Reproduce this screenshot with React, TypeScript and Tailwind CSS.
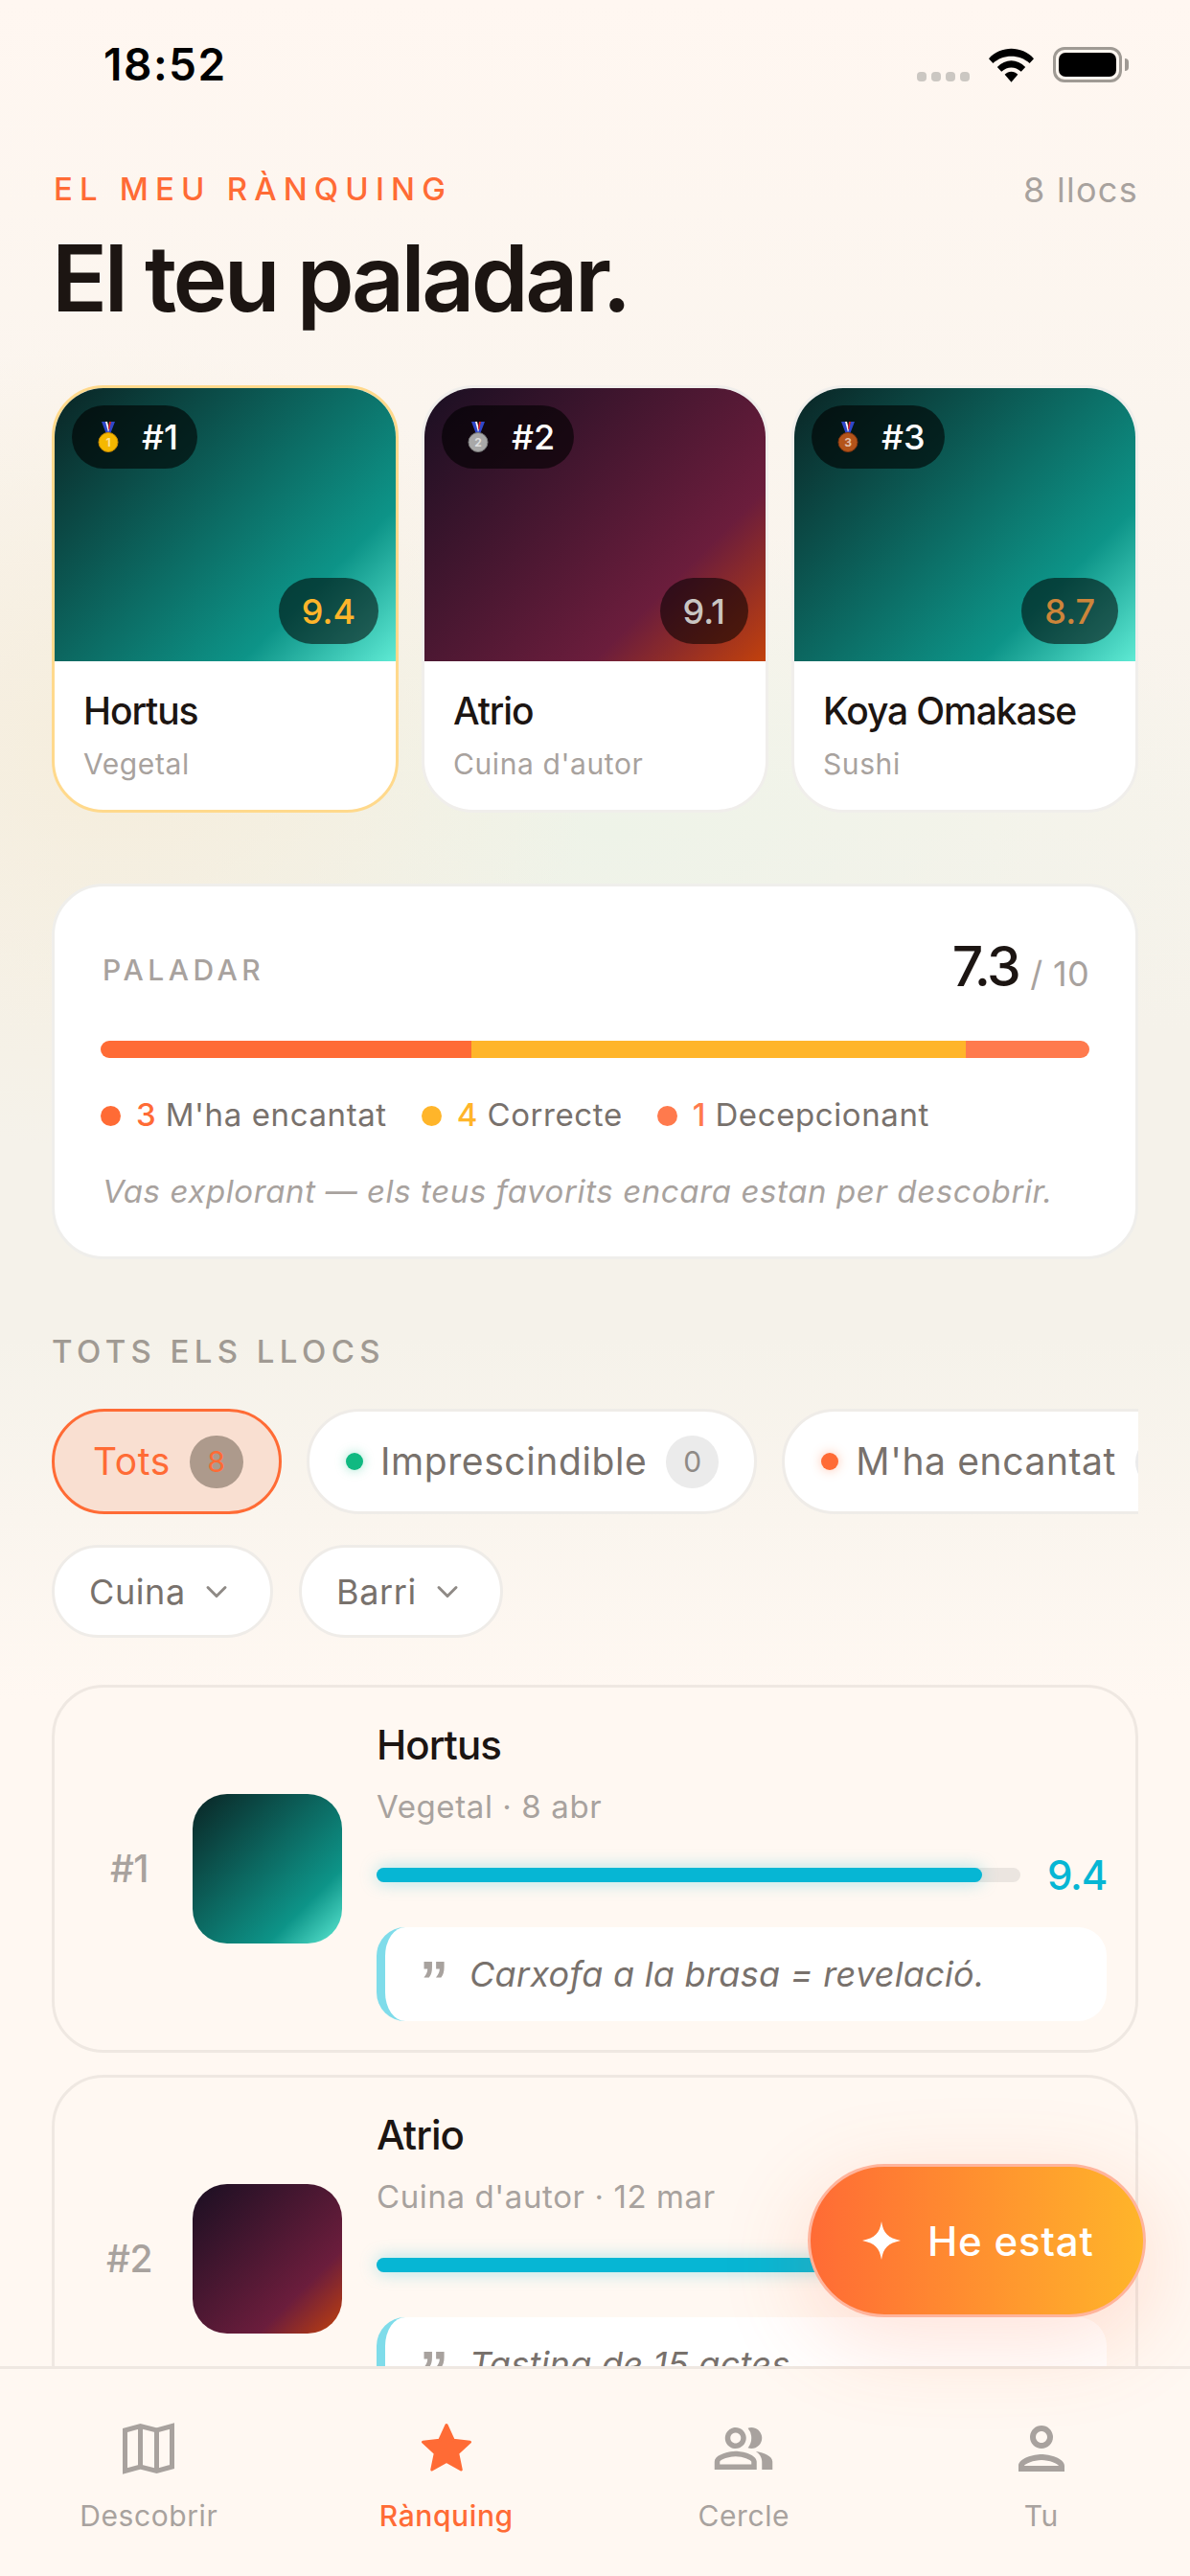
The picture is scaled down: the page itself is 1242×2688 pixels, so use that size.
import { ChevronDown } from 'lucide-react'
import { MdOutlinePeopleAlt, MdOutlinePerson } from 'react-icons/md'

const TEAL = 'bg-[linear-gradient(135deg,#0a2424_0%,#0d9488_75%,#5eead4_100%)]'
const WINE = 'bg-[linear-gradient(135deg,#1a0f22_0%,#6b1d3c_72%,#c2410c_100%)]'

const TOP = [
  { rank: 1, name: 'Hortus', kind: 'Vegetal', score: '9.4', scoreColor: 'text-[#ffb52a]', img: TEAL, border: 'border-[#ffd98c]', medal: '#f5b800', medalDark: '#c98a00' },
  { rank: 2, name: 'Atrio', kind: "Cuina d'autor", score: '9.1', scoreColor: 'text-[#c9c5c2]', img: WINE, border: 'border-[#f0eeeb]', medal: '#a8a8a8', medalDark: '#777777' },
  { rank: 3, name: 'Koya Omakase', kind: 'Sushi', score: '8.7', scoreColor: 'text-[#cd853a]', img: TEAL, border: 'border-[#f0eeeb]', medal: '#b4541a', medalDark: '#7f3510' },
]

function Medal({ color, dark, n }: { color: string; dark: string; n: number }) {
  return (
    <svg width="22" height="32" viewBox="0 0 22 32" aria-hidden="true">
      <path d="M4 0h4l3 9 3-9h4l-5 13h-4z" fill="#2f47c9" />
      <path d="M8 0h2l2 8-1 3z" fill="#fff" />
      <path d="M12 0h2l-2 9-1-2z" fill="#e0262e" />
      <circle cx="11" cy="21.500" r="10" fill={color} stroke={dark} strokeWidth="1" />
      <text x="11" y="26" textAnchor="middle" fontSize="12" fontWeight="700" fill="#ffffff" fillOpacity="0.65">{n}</text>
    </svg>
  )
}

function TopCard({ c }: { c: (typeof TOP)[number] }) {
  return (
    <div className={`relative flex-1 min-w-0 h-[446px] rounded-[54px] border-[3px] bg-white overflow-hidden ${c.border}`}>
      <div className={`relative h-[285px] ${c.img}`}>
        <div className="absolute left-[18px] top-[18px] h-[66px] pl-[27px] pr-[20px] rounded-full bg-black/60 flex items-center gap-[24px]">
          <Medal color={c.medal} dark={c.medalDark} n={c.rank} />
          <span className="text-[36px] font-medium text-white">#{c.rank}</span>
        </div>
        <div className={`absolute right-[18px] bottom-[18px] h-[69px] px-[24px] rounded-full bg-black/55 flex items-center text-[36px] font-medium ${c.scoreColor}`}>
          {c.score}
        </div>
      </div>
      <div className="px-[30px] pt-[22px]">
        <div className="text-[39px] leading-[60px] font-medium tracking-[-1.100px] text-[#1c1512] whitespace-nowrap">{c.name}</div>
        <div className="mt-[2px] text-[30px] leading-[46px] tracking-[0.600px] text-[#a8a29e]">{c.kind}</div>
      </div>
    </div>
  )
}

function Legend({ dot, n, numColor, label }: { dot: string; n: number; numColor: string; label: string }) {
  return (
    <div className="flex items-center">
      <span className={`w-[21px] h-[21px] rounded-full ${dot}`} />
      <span className={`ml-[16px] text-[33px] font-medium ${numColor}`}>{n}</span>
      <span className="ml-[10px] text-[33px] tracking-[0.600px] text-[#78716c]">{label}</span>
    </div>
  )
}

function Chip({ dot, glow, label, count }: { dot: string; glow: string; label: string; count: number }) {
  return (
    <div className="shrink-0 h-[110px] pl-[38px] pr-[37px] rounded-full bg-white border-[3px] border-[#efece8] flex items-center">
      <span className={`w-[18px] h-[18px] rounded-full ${dot} ${glow}`} />
      <span className="ml-[18px] text-[39px] tracking-[0.600px] text-[#78716c] whitespace-nowrap">{label}</span>
      <span className="ml-[20px] w-[55px] h-[55px] rounded-full bg-[#ebebeb] flex items-center justify-center text-[30px] text-[#8f8a86]">{count}</span>
    </div>
  )
}

function Drop({ label, width }: { label: string; width: string }) {
  return (
    <div className={`h-[97px] ${width} pl-[36px] rounded-full bg-white border-[3px] border-[#efece8] flex items-center gap-[14px]`}>
      <span className="text-[36px] tracking-[0.600px] text-[#78716c]">{label}</span>
      <ChevronDown className="w-[36px] h-[36px] text-[#8f8a86]" strokeWidth={2} />
    </div>
  )
}

function PlaceRow({ rank, name, meta, score, fill, img, note }: { rank: number; name: string; meta: string; score: string; fill: string; img: string; note: string }) {
  return (
    <div className="shrink-0 h-[384px] rounded-[54px] border-[3px] border-[#efe8e2] bg-[#fff8f2] flex items-center pl-[51px] pr-[30px]">
      <div className="w-[54px] text-center text-[39px] font-medium tracking-[-0.500px] text-[#a8a29e]">#{rank}</div>
      <div className={`ml-[39px] w-[156px] h-[156px] shrink-0 rounded-[36px] ${img}`} />
      <div className="ml-[36px] flex-1 min-w-0">
        <div className="text-[42px] leading-[60px] font-medium tracking-[-1px] text-[#1c1512]">{name}</div>
        <div className="mt-[10px] text-[33px] leading-[48px] tracking-[0.600px] text-[#a8a29e]">{meta}</div>
        <div className="mt-[16px] h-[63px] flex items-center">
          <div className="flex-1 h-[15px] rounded-full bg-[#ebe5e0]">
            <div className={`h-full rounded-full bg-[#06b6d4] shadow-[0_0_18px_rgba(6,182,212,0.35)] ${fill}`} />
          </div>
          <span className="ml-[28px] text-[42px] font-medium tracking-[-1.200px] text-[#06b6d4]">{score}</span>
        </div>
        <div className="mt-[23px] h-[98px] rounded-[30px] border-l-[9px] border-[#7fdcea] bg-white flex items-center pl-[36px]">
          <span className="self-start mt-[27px] w-[28px] text-[60px] leading-[60px] font-['Liberation_Sans',sans-serif] font-bold text-[#a8a29e]">”</span>
          <span className="ml-[24px] text-[36px] italic tracking-[0.300px] text-[#78716c] whitespace-nowrap">{note}</span>
        </div>
      </div>
    </div>
  )
}

export default function App() {
  return (
    <div className='relative w-[1242px] h-[2688px] overflow-hidden flex flex-col font-["Inter",sans-serif] bg-[radial-gradient(ellipse_500px_420px_at_120px_780px,#f5eddc_0%,transparent_100%),radial-gradient(ellipse_700px_320px_at_640px_870px,#eef3e8_0%,transparent_100%),linear-gradient(180deg,#fff7f1_0%,#f5f2ea_40%,#f5f2ea_52%,#fff8f2_66%,#fff8f2_100%)]'>
      {/* Status bar */}
      <div className="h-[132px] shrink-0 flex items-center justify-between pl-[108px] pr-[71px] pt-[3px]">
        <span className="text-[46px] font-semibold tracking-[1.500px] text-black">18:52</span>
        <div className="flex items-end">
          <div className="flex gap-[5px] mb-[1px]">
            {[0, 1, 2, 3].map(i => <span key={i} className="w-[10px] h-[10px] rounded-[4px] bg-[#cbc7c2]" />)}
          </div>
          <svg className="ml-[20px]" width="47" height="36" viewBox="0 0 48 36" aria-hidden="true">
            <path d="M0 11C13-3 35-3 48 11l-4.500 5C33 6 15 6 4.500 16z" fill="#000" />
            <path d="M9 20c9-9 21-9 30 0l-4.500 5c-6.500-6-14.500-6-21 0z" fill="#000" />
            <path d="M17 28c4-4 10-4 14 0l-7 8z" fill="#000" />
          </svg>
          <div className="ml-[20px] relative w-[72px] h-[37px] rounded-[12px] border-[3px] border-[#9f9a94] p-[3px]">
            <div className="w-full h-full rounded-[7px] bg-black" />
            <span className="absolute -right-[10px] top-[9px] w-[4px] h-[13px] rounded-r-full bg-[#9f9a94]" />
          </div>
        </div>
      </div>

      {/* Scroll area, clipped by the tab bar */}
      <div className="flex-1 min-h-0 overflow-hidden px-[54px] pt-[42px] flex flex-col">
        <div className="flex items-center justify-between h-[48px]">
          <span className="ml-[2px] text-[33px] font-medium tracking-[7.150px] text-[#ff6b35]">EL MEU RÀNQUING</span>
          <span className="text-[36px] tracking-[1.300px] text-[#a8a29e]">8 llocs</span>
        </div>
        <h1 className="mt-[6px] text-[96px] leading-[124px] font-semibold tracking-[-3.500px] text-[#1c1512]">El teu paladar.</h1>

        <div className="mt-[50px] flex gap-[24px] shrink-0">
          {TOP.map(c => <TopCard key={c.rank} c={c} />)}
        </div>

        {/* Palate card */}
        <div className="mt-[74px] shrink-0 h-[392px] rounded-[54px] border-[3px] border-[#efeeeb] bg-white px-[48px] pt-[54px]">
          <div className="flex items-center justify-between h-[60px]">
            <span className="ml-[2px] mt-[6px] text-[30px] font-medium tracking-[4.500px] text-[#a8a29e]">PALADAR</span>
            <span className="flex items-baseline">
              <span className="text-[57px] font-medium tracking-[-2.500px] text-[#1c1512]">7.3</span>
              <span className="ml-[12px] text-[36px] tracking-[0.300px] text-[#a8a29e]">/ 10</span>
            </span>
          </div>
          <div className="mt-[47px] h-[18px] rounded-full overflow-hidden flex">
            <div className="w-[387px] bg-[#ff6b35]" />
            <div className="w-[516px] bg-[#ffb52a]" />
            <div className="flex-1 bg-[#ff7a4d]" />
          </div>
          <div className="mt-[41px] h-[38px] flex items-center gap-[36px]">
            <Legend dot="bg-[#ff6b35]" n={3} numColor="text-[#ff6b35]" label="M'ha encantat" />
            <Legend dot="bg-[#ffb52a]" n={4} numColor="text-[#ffb52a]" label="Correcte" />
            <Legend dot="bg-[#ff7a4d]" n={1} numColor="text-[#ff7a4d]" label="Decepcionant" />
          </div>
          <p className="mt-[38px] ml-[2px] text-[33px] leading-[44px] italic tracking-[0.600px] text-[#a8a29e] whitespace-nowrap">Vas explorant — els teus favorits encara estan per descobrir.</p>
        </div>

        <div className="mt-[74px] h-[46px] shrink-0 flex items-center text-[33px] font-medium tracking-[5.400px] text-[#a09a93]">TOTS ELS LLOCS</div>

        {/* Filter chips */}
        <div className="mt-[36px] shrink-0 flex gap-[26px] overflow-hidden">
          <div className="shrink-0 h-[110px] pl-[40px] pr-[37px] rounded-full bg-[#f9dfd1] border-[3px] border-[#ff6b35] flex items-center">
            <span className="text-[39px] tracking-[0.600px] text-[#ff6b35]">Tots</span>
            <span className="ml-[20px] w-[56px] h-[55px] rounded-full bg-[#ad9a8c] flex items-center justify-center text-[30px] text-[#ff6b35]">8</span>
          </div>
          <Chip dot="bg-[#10b981]" glow="shadow-[0_0_12px_rgba(16,185,129,0.4)]" label="Imprescindible" count={0} />
          <Chip dot="bg-[#ff6b35]" glow="shadow-[0_0_12px_rgba(255,107,53,0.4)]" label="M'ha encantat" count={3} />
        </div>
        <div className="mt-[32px] shrink-0 flex gap-[27px]">
          <Drop label="Cuina" width="w-[231px]" />
          <Drop label="Barri" width="w-[213px]" />
        </div>

        {/* Place list */}
        <div className="mt-[49px] flex flex-col gap-[23px]">
          <PlaceRow rank={1} name="Hortus" meta="Vegetal · 8 abr" score="9.4" fill="w-[94%]" img={TEAL} note="Carxofa a la brasa = revelació." />
          <PlaceRow rank={2} name="Atrio" meta="Cuina d'autor · 12 mar" score="9.1" fill="w-[91%]" img={WINE} note="Tasting de 15 actes." />
        </div>
      </div>

      {/* Tab bar */}
      <nav className="relative h-[219px] shrink-0 border-t-[3px] border-[#efe8e2] bg-[#fff8f2] grid grid-cols-4 pt-[50px]">
        {[
          { label: 'Descobrir', icon: (
            <svg width="56" height="56" viewBox="0 0 56 56" fill="none" stroke="currentColor" strokeWidth="5" strokeLinejoin="miter" aria-hidden="true">
              <path d="M3.500 9 19.500 4.500l17 4.500 16-4.500v42.500L36.500 51.500l-17-4.500-16 4.500z" />
              <path d="M19.500 4.500V47M36.500 9v42.500" />
            </svg>
          ) },
          { label: 'Rànquing', active: true, icon: (
            <svg width="60" height="60" viewBox="0 0 24 24" aria-hidden="true"><path d="M12 2.200l2.900 6.300 6.900.8-5.100 4.700 1.400 6.800L12 17.400l-6.100 3.400 1.400-6.800-5.100-4.700 6.900-.8z" fill="#ff6b35" stroke="#ff6b35" strokeWidth="1.200" strokeLinejoin="round" /></svg>
          ) },
          { label: 'Cercle', icon: <MdOutlinePeopleAlt className="w-[66px] h-[66px]" /> },
          { label: 'Tu', icon: <MdOutlinePerson className="w-[72px] h-[72px]" /> },
        ].map(t => (
          <div key={t.label} className={`flex flex-col items-center ${t.active ? 'text-[#ff6b35]' : 'text-[#a8a29e]'}`}>
            <div className="h-[66px] flex items-center justify-center">{t.icon}</div>
            <span className={`mt-[15px] text-[30px] tracking-[0.600px] ${t.active ? 'font-medium' : 'font-normal'}`}>{t.label}</span>
          </div>
        ))}
      </nav>

      {/* Floating action button */}
      <div className="absolute left-[843px] top-[2258px] w-[353px] h-[160px] rounded-full border-[3px] border-[#ffb49c] bg-[linear-gradient(90deg,#ff6b35,#ffb52a)] shadow-[0_24px_96px_rgba(255,107,53,0.2)] flex items-center pl-[54px] gap-[28px]">
        <svg width="40" height="40" viewBox="0 0 42 42" aria-hidden="true"><path d="M21 0c2 13 7 18 21 21-14 3-19 8-21 21-2-13-7-18-21-21 14-3 19-8 21-21z" fill="#fff" /></svg>
        <span className="text-[42px] font-medium tracking-[0.800px] text-white whitespace-nowrap">He estat</span>
      </div>
    </div>
  )
}
